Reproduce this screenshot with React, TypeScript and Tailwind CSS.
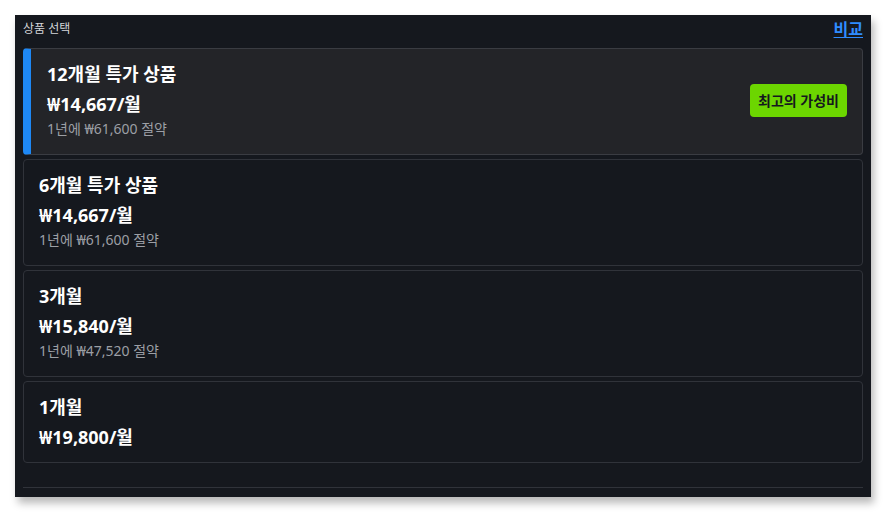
const plans = [
  { name: '12개월 특가 상품', price: '₩14,667/월', save: '1년에 ₩61,600 절약', featured: true },
  { name: '6개월 특가 상품', price: '₩14,667/월', save: '1년에 ₩61,600 절약' },
  { name: '3개월', price: '₩15,840/월', save: '1년에 ₩47,520 절약' },
  { name: '1개월', price: '₩19,800/월' },
];

export default function App() {
  return (
    <div
      className="w-[886px] h-[512px] bg-white pt-[15px] pl-[15px]"
      style={{ fontFamily: '"Noto Sans", "Noto Sans CJK KR", sans-serif' }}
    >
      <div className="w-[856px] h-[482px] bg-[#15181e] px-2 shadow-[3px_6px_8px_rgba(0,0,0,0.28)] flex flex-col">
        <div className="h-[28px] mb-[5px] flex items-center justify-between">
          <span className="text-[12px] leading-4 text-[#d4d6da]">상품 선택</span>
          <a className="text-[16px] leading-5 font-bold text-[#2f8cff] underline underline-offset-2 cursor-pointer">비교</a>
        </div>

        <div className="flex flex-col gap-1">
          {plans.map((p) => (
            <div
              key={p.name}
              className={
                p.featured
                  ? 'flex items-center justify-between rounded-[4px] border border-[#3a3c42] border-l-[8px] border-l-[#1e88f5] bg-[#232428] pl-4 pr-[15px] pt-[13px] pb-[15px]'
                  : p.save
                    ? 'flex items-center justify-between rounded-[4px] border border-[#30333a] bg-[#15181e] px-[15px] pt-[13px] pb-[15px]'
                    : 'flex items-center justify-between rounded-[4px] border border-[#30333a] bg-[#15181e] px-[15px] pt-[13px] pb-[13px]'
              }
            >
              <div>
                <div className="text-[18px] leading-6 font-bold text-white">{p.name}</div>
                <div className="mt-[6px] text-[18px] leading-6 font-bold text-white">{p.price}</div>
                {p.save && <div className="mt-[3px] text-[14px] leading-5 text-[#9c9fa5]">{p.save}</div>}
              </div>
              {p.featured && (
                <span className="h-[33px] px-[8px] flex items-center rounded-[4px] bg-[#6cd600] text-[14px] font-bold text-[#15181e]">
                  최고의 가성비
                </span>
              )}
            </div>
          ))}
        </div>

        <div className="mt-[24px] border-t border-[#30333a]" />
      </div>
    </div>
  );
}
